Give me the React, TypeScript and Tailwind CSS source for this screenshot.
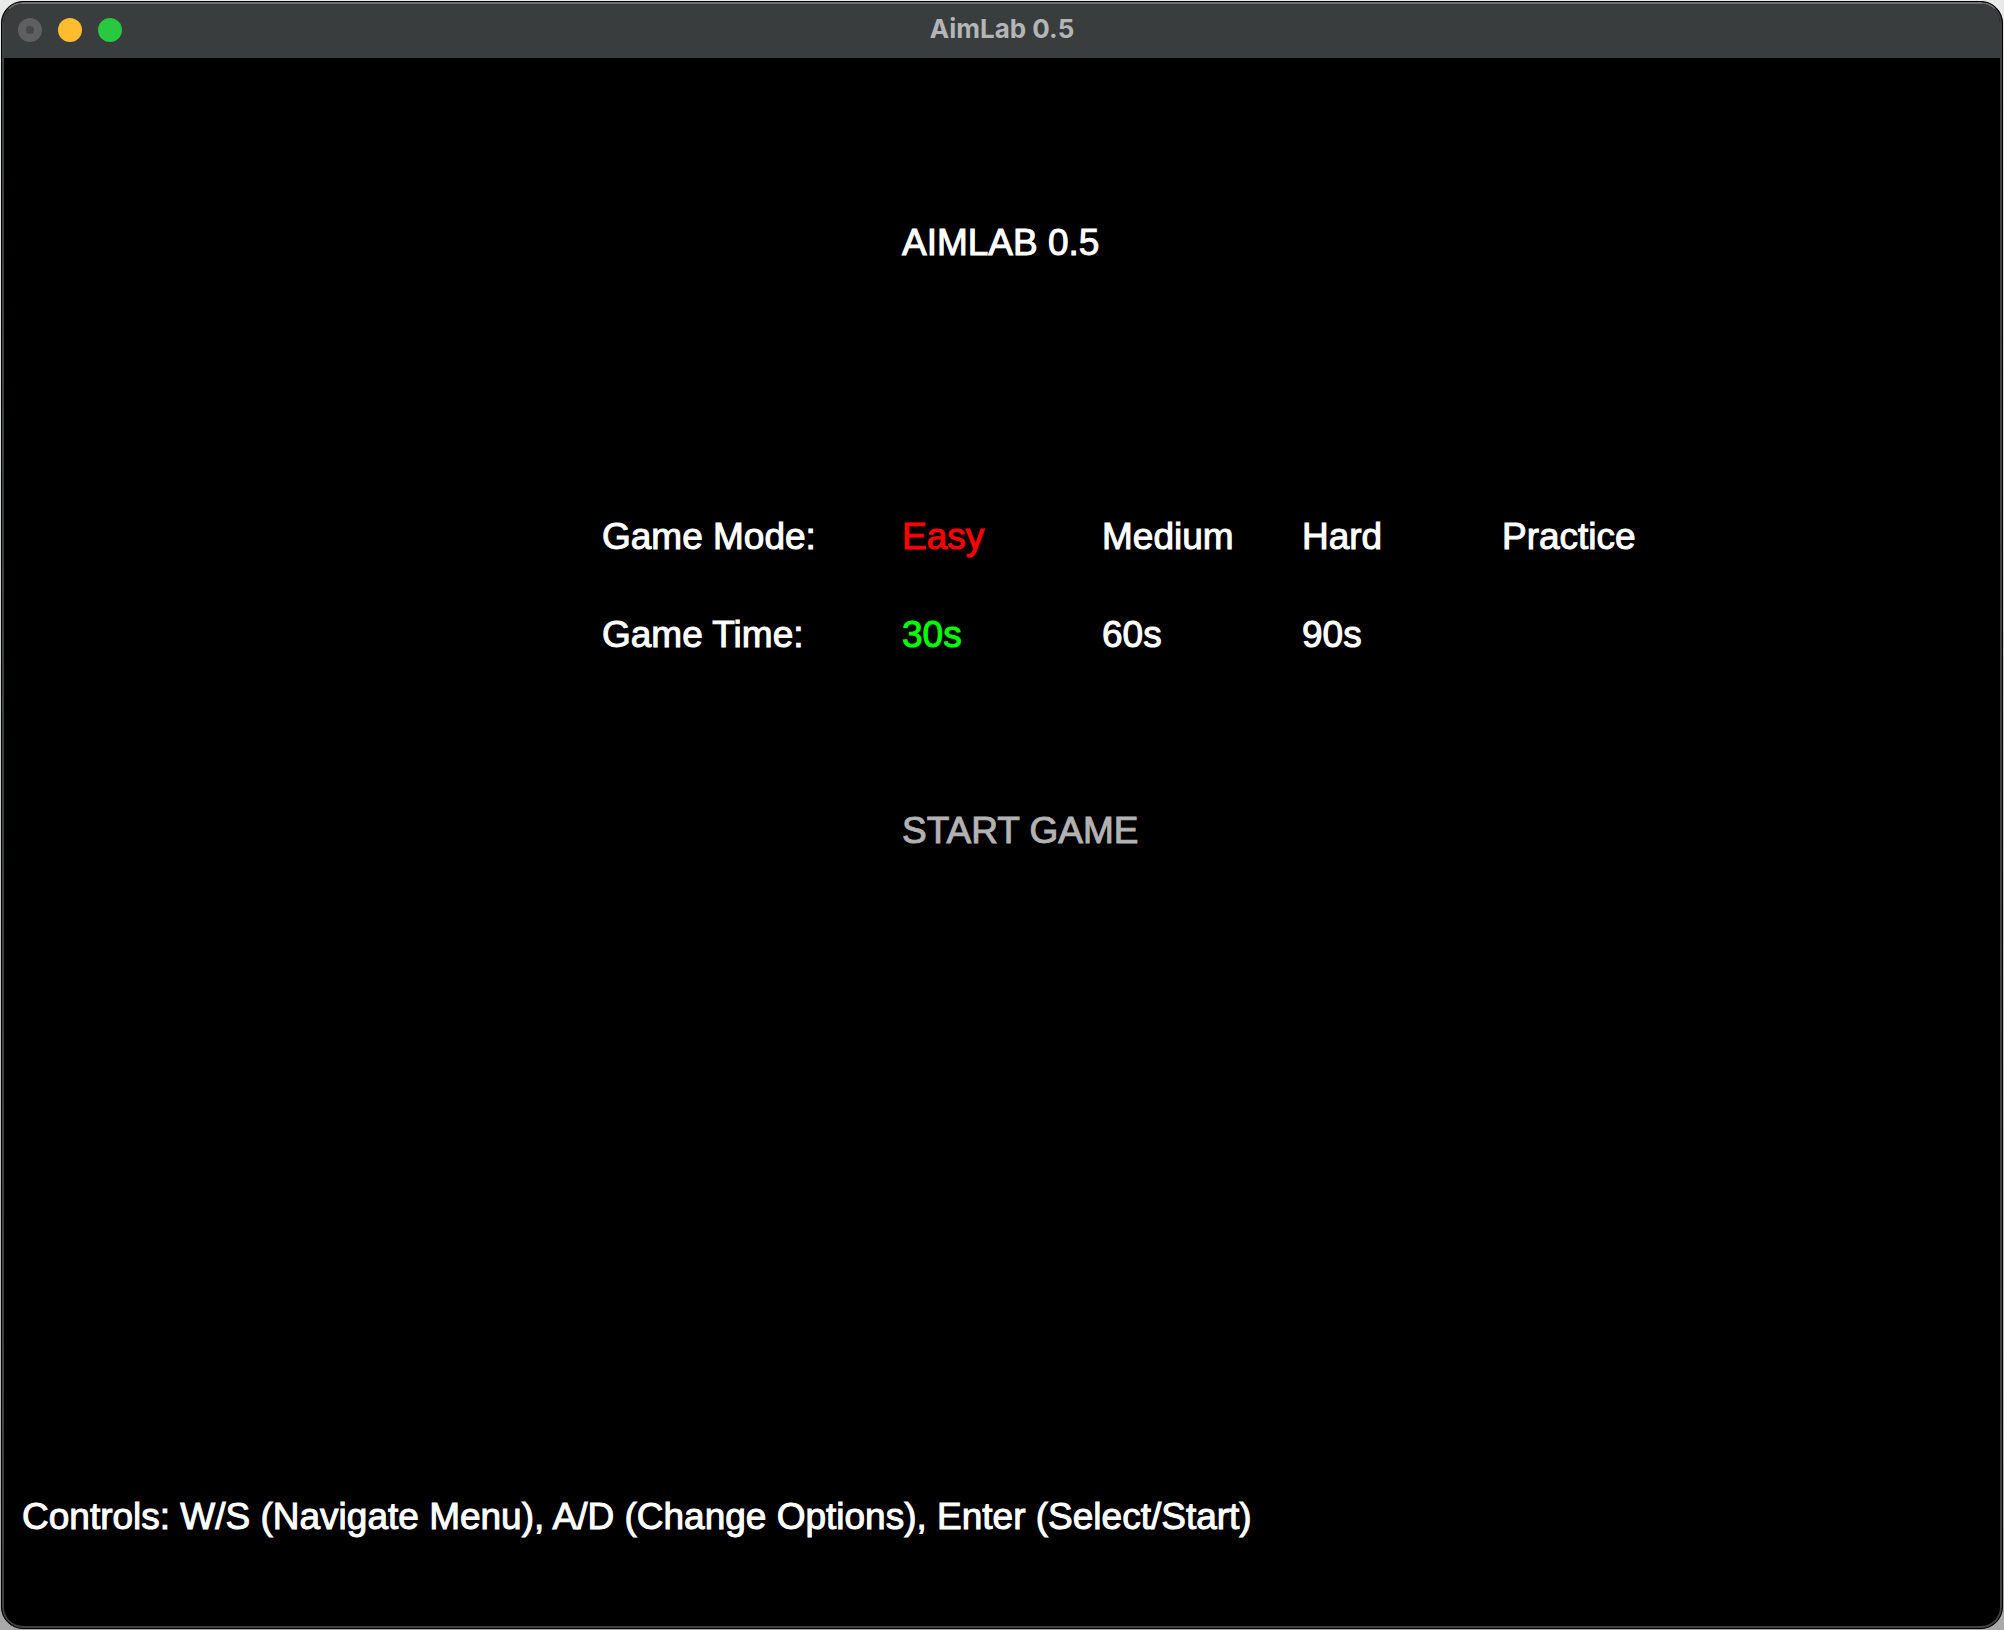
const modes = ["Easy", "Medium", "Hard", "Practice"];
const times = ["30s", "60s", "90s"];

function Options({ label, values, active }: { label: string; values: string[]; active: string }) {
  return (
    <div role="group" aria-label={label} className="grid grid-cols-[300px_200px_200px_200px_200px] leading-[48px]">
      <span>{label}</span>
      {values.map((v, i) => (
        <button key={v} type="button" aria-pressed={i === 0} className={i === 0 ? `text-left ${active}` : "text-left"}>
          {v}
        </button>
      ))}
    </div>
  );
}

export default function App() {
  return (
    <div className="flex min-h-screen flex-col bg-linear-to-b from-[#e6eae8] to-[#a8a8a8] p-px">
      <div className="flex flex-1 flex-col overflow-hidden rounded-[22px] border border-black bg-black">
        <div className="flex flex-1 flex-col overflow-hidden rounded-[21px] border-2 border-[#404242] border-t-[#6c706e] bg-black font-['Liberation_Sans',sans-serif] text-white">
          <header className="grid h-[54px] grid-cols-[1fr_auto_1fr] items-center bg-[#393d3d] px-3.5 pb-0.5">
            <div className="flex gap-4">
              <button type="button" aria-label="Close" className="flex size-6 items-center justify-center rounded-full bg-[#5f5f61]">
                <span className="size-2 rounded-full bg-[#474849]" />
              </button>
              <button type="button" aria-label="Minimize" className="size-6 rounded-full bg-[#febc2e]" />
              <button type="button" aria-label="Zoom" className="size-6 rounded-full bg-[#28c840]" />
            </div>
            <h1 className="pb-0.5 font-['Inter',sans-serif] text-[26px] leading-8 font-bold text-[#b4b5b7]">AimLab 0.5</h1>
          </header>
          <main className="flex flex-1 flex-col text-[37px] [-webkit-text-stroke:1px_currentColor]">
            <div className="pl-[598px]">
              <h2 className="mt-[161px] pl-[300px] leading-[48px]">AIMLAB 0.5</h2>
              <div className="mt-[246px] flex flex-col gap-[50px]">
                <Options label="Game Mode:" values={modes} active="text-[#ff0000]" />
                <Options label="Game Time:" values={times} active="text-[#00ff00]" />
              </div>
              <button type="button" className="mt-[148px] ml-[300px] leading-[48px] text-[#b2b2b2]">START GAME</button>
            </div>
            <p className="mt-auto mb-[85px] pl-[18px] leading-[48px]">
              Controls: W/S (Navigate Menu), A/D (Change Options), Enter (Select/Start)
            </p>
          </main>
        </div>
      </div>
    </div>
  );
}
